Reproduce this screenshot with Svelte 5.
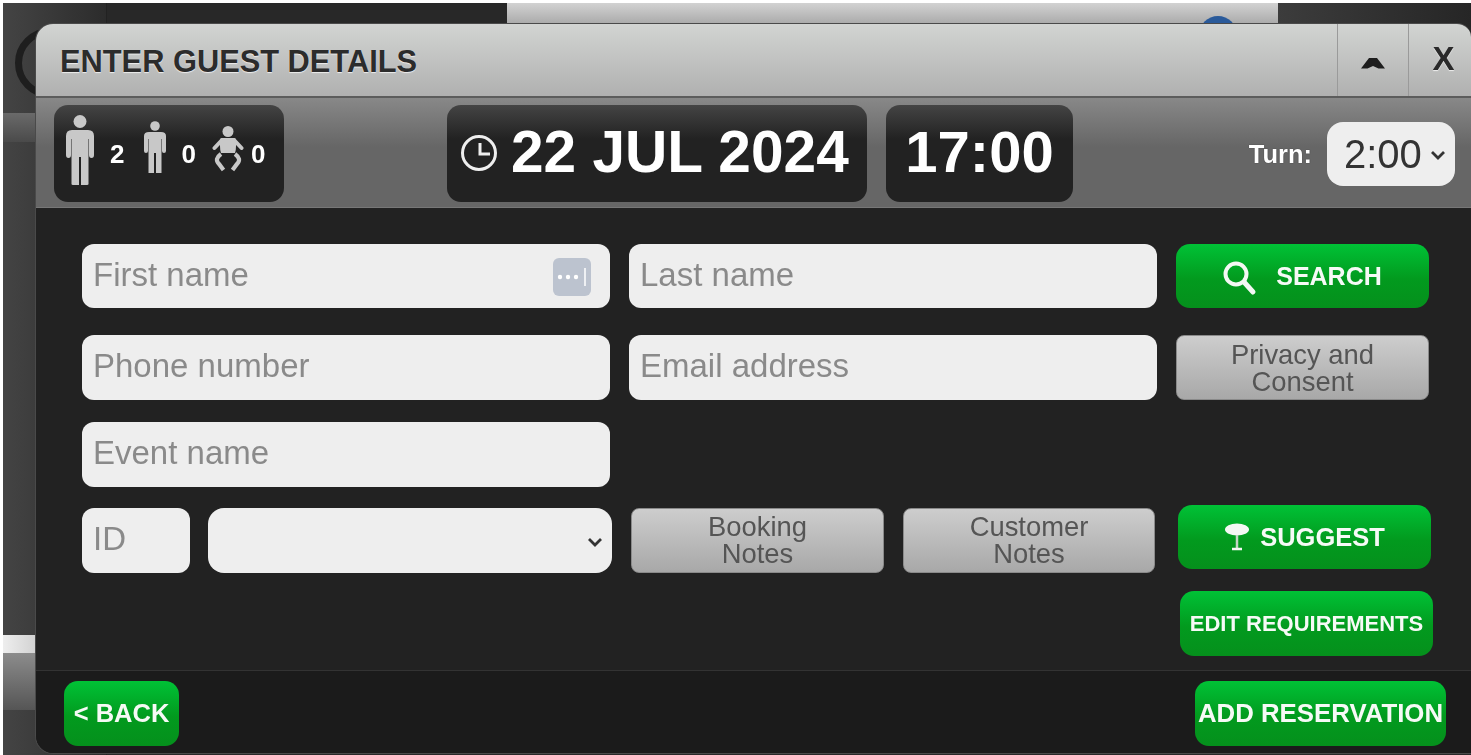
<script>
  // guest counters shown in the top left panel
  let adults = 2;
  let children = 0;
  let babies = 0;
  let turn = "2:00";
</script>

<div class="backdrop">
  <div class="bg-side"></div>
  <div class="bg-ring"></div>
  <div class="bg-strip"></div>
  <div class="bg-light"></div>
  <div class="bg-grey"></div>
  <div class="bg-header"><span class="bg-dot"></span></div>
  <div class="bg-right"></div>
</div>

<div class="modal">
  <div class="titlebar">
    <div class="title">ENTER GUEST DETAILS</div>
    <button class="bar-btn" aria-label="Collapse">
      <svg width="24" height="12" viewBox="0 0 24 12"><path d="M0 11.5 L8 1 H16 L24 11.5 H17.5 L12 9 L6.5 11.5 Z" fill="#1e1e1e"/></svg>
    </button>
    <button class="bar-btn close">X</button>
  </div>

  <div class="toolbar">
    <div class="panel guests">
      <svg class="big" width="28" height="70" viewBox="0 0 28 70">
        <circle cx="14" cy="6.5" r="6.5" fill="#c8c8c8"/>
        <path d="M6 15 H22 Q28 15 28 21 V40 Q28 43 25.5 43 Q23 43 23 40 V24 H22.5 V69 Q22.5 70 21 70 H15 V42 H13 V70 H7 Q5.5 70 5.5 69 V24 H5 V40 Q5 43 2.5 43 Q0 43 0 40 V21 Q0 15 6 15 Z" fill="#c8c8c8"/>
      </svg>
      <b>{adults}</b>
      <svg class="mid" width="22" height="52" viewBox="0 0 22 52">
        <circle cx="11" cy="5" r="4.8" fill="#c8c8c8"/>
        <path d="M5 11 H17 Q22 11 22 15 V30 Q22 32 20 32 Q18 32 18 30 V18 H17.5 V52 H12 V32 H10 V52 H4.5 V18 H4 V30 Q4 32 2 32 Q0 32 0 30 V15 Q0 11 5 11 Z" fill="#c8c8c8"/>
      </svg>
      <b>{children}</b>
      <svg class="baby" width="32" height="46" viewBox="0 0 32 46">
        <circle cx="16" cy="5.5" r="5.5" fill="#c8c8c8"/>
        <path d="M10 12 H22 Q24 12 24 14 V20 Q24 24 23 27 H9 Q8 24 8 20 V14 Q8 12 10 12 Z" fill="#c8c8c8"/>
        <path d="M10 14 L2.5 22 M22 14 L29.5 22" stroke="#c8c8c8" stroke-width="4" stroke-linecap="round"/>
        <path d="M9 28 Q2 33 7 38 L11.5 44 M23 28 Q30 33 25 38 L20.5 44" fill="none" stroke="#c8c8c8" stroke-width="4.2"/>
      </svg>
      <b>{babies}</b>
    </div>

    <div class="panel date">
      <svg width="38" height="38" viewBox="0 0 38 38">
        <circle cx="19" cy="19" r="16.5" fill="none" stroke="#eee" stroke-width="3"/>
        <path d="M20 9 V20 H30" fill="none" stroke="#eee" stroke-width="3"/>
      </svg>
      <span>22 JUL 2024</span>
    </div>
    <div class="panel time"><span>17:00</span></div>

    <div class="turn">
      <label for="turn">Turn:</label>
      <div class="pick">
        <select id="turn" bind:value={turn}>
          <option>2:00</option>
          <option>2:30</option>
        </select>
        <svg class="chevron" width="16" height="10" viewBox="0 0 16 10"><path d="M2 2 L8 8 L14 2" fill="none" stroke="#333" stroke-width="2.8"/></svg>
      </div>
    </div>
  </div>

  <div class="body">
    <div class="row first">
      <div class="keyed">
        <input class="wide" placeholder="First name" />
        <span class="key">
          <svg width="38" height="38" viewBox="0 0 38 38">
            <circle cx="7" cy="19" r="2.2" fill="#fff"/>
            <circle cx="15" cy="19" r="2.2" fill="#fff"/>
            <circle cx="23" cy="19" r="2.2" fill="#fff"/>
            <path d="M32 10 V28" stroke="#fff" stroke-width="1.5"/>
          </svg>
        </span>
      </div>
      <input class="wide" placeholder="Last name" />
      <button class="btn green search">
        <svg width="34" height="36" viewBox="0 0 34 36">
          <circle cx="13" cy="13" r="10.5" fill="none" stroke="#f4f8f4" stroke-width="4"/>
          <path d="M21 21 L30 31" stroke="#f4f8f4" stroke-width="5" stroke-linecap="round"/>
        </svg>
        SEARCH
      </button>
    </div>

    <div class="row second">
      <input class="wide" placeholder="Phone number" />
      <input class="wide" placeholder="Email address" />
      <button class="btn grey privacy">Privacy and<br />Consent</button>
    </div>

    <div class="row third">
      <input class="wide" placeholder="Event name" />
    </div>

    <div class="row fourth">
      <input class="id" placeholder="ID" />
      <div class="pick kind">
        <select><option></option></select>
        <svg class="chevron" width="16" height="10" viewBox="0 0 16 10"><path d="M2 2 L8 8 L14 2" fill="none" stroke="#333" stroke-width="2.8"/></svg>
      </div>
      <button class="btn grey note">Booking<br />Notes</button>
      <button class="btn grey note">Customer<br />Notes</button>
      <button class="btn green suggest">
        <svg width="26" height="28" viewBox="0 0 26 28">
          <ellipse cx="13" cy="6.5" rx="12" ry="6" fill="#f4f8f4"/>
          <path d="M13 12 V25" stroke="#c5d5c5" stroke-width="2.5"/>
          <path d="M8 26 H18" stroke="#f4f8f4" stroke-width="2.5"/>
        </svg>
        SUGGEST
      </button>
    </div>

    <div class="row fifth">
      <button class="btn green edit">EDIT REQUIREMENTS</button>
    </div>
  </div>

  <div class="footer">
    <button class="btn green back">&lt; BACK</button>
    <button class="btn green add">ADD RESERVATION</button>
  </div>
</div>

<style>
  :global(body) {
    margin: 0;
    background: #fff;
    overflow: hidden;
    font-family: "Liberation Sans", Arial, sans-serif;
  }

  .backdrop {
    position: absolute;
    left: 3px;
    top: 3px;
    right: 0;
    height: 752px;
    background: #282828;
    overflow: hidden;
  }
  .bg-side {
    position: absolute;
    left: 0;
    top: 0;
    width: 103px;
    height: 100%;
    background: linear-gradient(90deg, #444, #2c2c2c);
    border-right: 1px solid #222;
  }
  .bg-ring {
    position: absolute;
    left: 12px;
    top: 25px;
    width: 70px;
    height: 70px;
    box-sizing: border-box;
    border: 7px solid #1e1e1e;
    border-radius: 50%;
  }
  .bg-strip {
    position: absolute;
    left: 0;
    top: 110px;
    width: 40px;
    height: 29px;
    background: linear-gradient(#6a6a6a, #4a4a4a);
  }
  .bg-light {
    position: absolute;
    left: 0;
    top: 632px;
    width: 40px;
    height: 18px;
    background: linear-gradient(90deg, #eee, #ccc);
  }
  .bg-grey {
    position: absolute;
    left: 0;
    top: 650px;
    width: 40px;
    height: 57px;
    background: linear-gradient(#8c8c8c, #555);
  }
  .bg-header {
    position: absolute;
    left: 504px;
    top: 0;
    width: 771px;
    height: 24px;
    background: linear-gradient(#d2d2d2, #a4a4a4);
    overflow: hidden;
  }
  .bg-right {
    position: absolute;
    left: 1275px;
    top: 0;
    right: 0;
    height: 24px;
    background: linear-gradient(90deg, #3c3c3c, #262626);
  }
  .bg-dot {
    position: absolute;
    left: 692px;
    top: 13px;
    width: 38px;
    height: 38px;
    border-radius: 50%;
    background: #2a5a9a;
  }

  .modal {
    position: absolute;
    z-index: 2;
    left: 35px;
    top: 23px;
    width: 1436px;
    height: 731px;
    box-sizing: border-box;
    display: flex;
    flex-direction: column;
    background: #222;
    border: 1px solid #4a4a4a;
    border-right: none;
    border-radius: 18px 14px 0 18px;
    overflow: hidden;
    color: #fff;
    filter: blur(0.4px);
  }

  .titlebar {
    display: flex;
    align-items: stretch;
    flex: 0 0 74px;
    background: linear-gradient(#d2d4d2, #b0b0b0);
    border-bottom: 2px solid #5c5c5c;
    box-sizing: border-box;
  }
  .title {
    flex: 1;
    align-self: center;
    padding: 4px 0 0 24px;
    font-size: 30.8px;
    font-weight: bold;
    color: #2c2c2c;
    text-shadow: 0 1px 1px #eee;
  }
  .bar-btn {
    width: 71px;
    padding: 0;
    background: none;
    border: none;
    border-left: 1px solid #9a9a9a;
    cursor: pointer;
  }
  .bar-btn svg {
    display: block;
    margin: 6px auto 0;
  }
  .bar-btn.close {
    width: 63px;
    padding: 0 0 2px 7px;
    font: bold 33px "Liberation Sans", Arial, sans-serif;
    color: #2a2a2a;
    text-shadow: 0 1px 1px #eee;
  }

  .toolbar {
    display: flex;
    align-items: center;
    flex: 0 0 110px;
    box-sizing: border-box;
    padding: 1px 16px 0 18px;
    background: linear-gradient(#888 0, #666 45%, #666 100%);
    border-bottom: 1px solid #777;
  }
  .panel {
    display: flex;
    align-items: center;
    height: 97px;
    box-sizing: border-box;
    border-radius: 14px;
    background: linear-gradient(#444 0, #222 35%, #222 100%);
  }
  .guests {
    width: 230px;
    padding-left: 12px;
  }
  .guests b {
    font-size: 26px;
    margin-top: 2px;
  }
  .guests .big {
    margin: -7px 16px 0 0;
  }
  .guests .mid {
    margin: -13px 15px 0 20px;
  }
  .guests .baby {
    margin: -8px 7px 0 16px;
  }
  .date {
    width: 420px;
    margin-left: 163px;
    padding-left: 13px;
    font-size: 58.6px;
    font-weight: bold;
  }
  .date span {
    margin: -4px 0 0 13px;
  }
  .date svg {
    margin-top: -1px;
  }
  .time {
    width: 187px;
    margin-left: 19px;
    justify-content: center;
    font-size: 58px;
    font-weight: bold;
  }
  .time span {
    margin-top: -4px;
  }
  .turn {
    margin-left: auto;
    display: flex;
    align-items: center;
    gap: 15px;
  }
  .turn label {
    margin-top: 3px;
    font-size: 25.5px;
    font-weight: bold;
    color: #fff;
    text-shadow: 0 0 1px #222;
  }
  .turn .pick {
    margin-top: 2px;
    width: 128px;
    height: 64px;
  }
  .turn select {
    padding-left: 17px;
    font-size: 40px;
  }

  input,
  select {
    box-sizing: border-box;
    border: none;
    background-color: #eee;
    color: #333;
    font-family: "Liberation Sans", Arial, sans-serif;
    border-radius: 12px;
    outline: none;
  }
  input {
    height: 65px;
    padding: 0 11px 3px;
    font-size: 33px;
  }
  input::placeholder {
    color: #8a8a8a;
    opacity: 1;
  }
  select {
    appearance: none;
    display: block;
    width: 100%;
    height: 100%;
    border-radius: 16px;
  }
  .pick {
    position: relative;
  }
  .chevron {
    position: absolute;
    right: 9px;
    top: 50%;
    margin-top: -4px;
    pointer-events: none;
  }

  .body {
    flex: 1;
    padding: 36px 0 0 46px;
  }
  .row {
    display: flex;
    align-items: flex-start;
  }
  .first input,
  .first .btn {
    height: 64px;
  }
  .second {
    margin-top: 27px;
  }
  .third {
    margin-top: 22px;
  }
  .fourth {
    margin-top: 21px;
  }
  .fifth {
    margin-top: 18px;
    justify-content: flex-end;
    padding-right: 38px;
  }
  .wide {
    width: 528px;
    margin-right: 19px;
  }
  .keyed {
    position: relative;
    height: 64px;
  }
  .key {
    position: absolute;
    right: 38px;
    top: 14px;
    width: 38px;
    height: 38px;
    border-radius: 6px;
    background: #bcc3cf;
  }
  .key svg {
    display: block;
  }
  .id {
    width: 108px;
    margin-right: 18px;
  }
  .kind {
    width: 404px;
    height: 65px;
    margin-right: 19px;
  }

  .btn {
    box-sizing: border-box;
    height: 65px;
    padding: 0;
    border: none;
    border-radius: 14px;
    font-family: "Liberation Sans", Arial, sans-serif;
    cursor: pointer;
  }
  .green {
    background: linear-gradient(#00c236 0, #029a1e 55%, #05901c 100%);
    color: #f6faf6;
    font-weight: bold;
    font-size: 25px;
  }
  .grey {
    background: linear-gradient(#cdcdcd, #a8a8a8);
    border: 1px solid #8a8a8a;
    border-radius: 8px;
    color: #555;
    font-size: 27.4px;
    line-height: 27px;
  }
  .note {
    padding-bottom: 2px;
  }
  .search,
  .suggest {
    display: flex;
    align-items: center;
    justify-content: center;
  }
  .search {
    width: 253px;
    gap: 19px;
  }
  .search svg {
    margin-top: 6px;
  }
  .privacy {
    width: 253px;
  }
  .note {
    width: 253px;
    margin-right: 19px;
  }
  .note + .note {
    width: 252px;
  }
  .suggest {
    width: 253px;
    margin-left: 4px;
    gap: 10px;
    font-size: 25.5px;
    margin-top: -3px;
    height: 64px;
  }
  .edit {
    width: 253px;
    font-size: 22px;
  }

  .footer {
    flex: 0 0 83px;
    box-sizing: border-box;
    display: flex;
    align-items: flex-start;
    justify-content: space-between;
    padding: 10px 25px 0 28px;
    background: #1b1b1b;
    border-top: 1px solid #333;
  }
  .back {
    width: 115px;
    font-size: 25.5px;
  }
  .add {
    width: 251px;
    font-size: 25.8px;
  }
</style>
